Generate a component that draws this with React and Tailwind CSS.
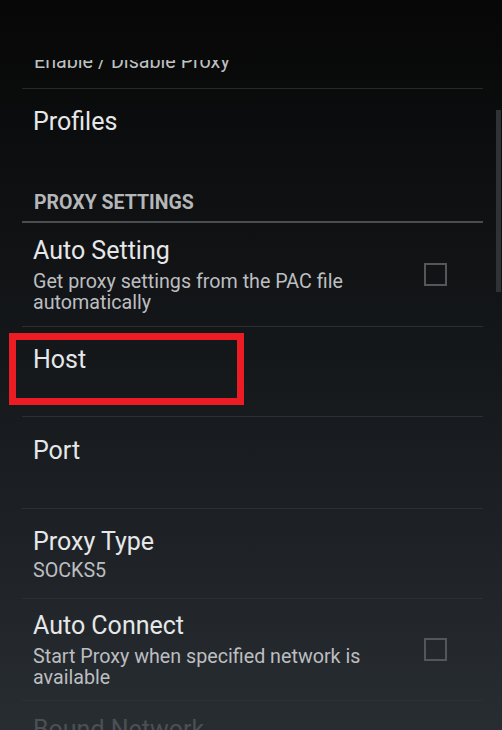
import React from "react";

const font = { fontFamily: "Roboto, 'Noto Sans', sans-serif" };

function Checkbox() {
  return <div className="w-[23px] h-[23px] border-2 border-[#53575a] shrink-0" />;
}

function Divider({ thick }) {
  return thick ? (
    <div className="h-[2px] bg-[#4a4d50]" />
  ) : (
    <div className="h-px bg-[#2c3033]" />
  );
}

export default function App() {
  return (
    <div
      className="relative w-[502px] h-[730px] overflow-hidden bg-gradient-to-b from-[#070707] via-[#15181b] to-[#282d32]"
      style={font}
    >
      <div className="h-[60px]" />
      <div className="ml-[22px] w-[461px] h-[670px] overflow-hidden">
        {/* clipped previous summary */}
        <div className="-mt-[9px] pl-[12px] pb-[16px] text-[19.7px] leading-[21px] text-[#bfc1c2]">
          Enable / Disable Proxy
        </div>
        <div className="h-px bg-[#2a2824]" />

        {/* Profiles */}
        <div className="pl-[11px] pt-[18px] h-[80px] text-[25px] leading-[30px] text-[#e6e7e8]">
          Profiles
        </div>

        {/* Category header */}
        <div className="pl-[12px] pt-[22px] pb-[7px] text-[19.5px] leading-[23px] font-bold text-[#b4b6b8]">
          PROXY SETTINGS
        </div>
        <Divider thick />

        {/* Auto Setting */}
        <div className="h-[103px] flex items-center pl-[11px] pr-[36px]">
          <div className="flex-1">
            <div className="text-[25px] leading-[30px] text-[#e6e7e8]">Auto Setting</div>
            <div className="mt-[5px] text-[19.7px] leading-[21px] text-[#bcbec0] w-[340px]">
              Get proxy settings from the PAC file automatically
            </div>
          </div>
          <Checkbox />
        </div>
        <Divider />

        {/* Host */}
        <div className="h-[89px] pl-[11px] pt-[18px]">
          <div className="text-[25px] leading-[30px] text-[#e6e7e8]">Host</div>
        </div>
        <Divider />

        {/* Port */}
        <div className="h-[91px] pl-[11px] pt-[19px]">
          <div className="text-[25px] leading-[30px] text-[#e6e7e8]">Port</div>
        </div>
        <Divider />

        {/* Proxy Type */}
        <div className="h-[89px] pl-[11px] pt-[18px]">
          <div className="text-[25px] leading-[30px] text-[#e6e7e8]">Proxy Type</div>
          <div className="mt-[3px] text-[19.7px] leading-[21px] text-[#bcbec0]">SOCKS5</div>
        </div>
        <Divider />

        {/* Auto Connect */}
        <div className="h-[101px] flex items-center pl-[11px] pr-[36px]">
          <div className="flex-1">
            <div className="text-[25px] leading-[30px] text-[#e6e7e8]">Auto Connect</div>
            <div className="mt-[5px] text-[19.7px] leading-[21px] text-[#bcbec0] w-[360px]">
              Start Proxy when specified network is available
            </div>
          </div>
          <Checkbox />
        </div>
        <Divider />

        {/* Bound Network (disabled) */}
        <div className="pl-[11px] pt-[14px] text-[25px] leading-[30px] text-[#4b5055]">
          Bound Network
        </div>
      </div>

      {/* annotation box over Host */}
      <div className="absolute left-[9px] top-[333px] w-[235px] h-[72px] border-[7px] border-[#ec1c24]" />

      {/* scrollbar */}
      <div className="absolute left-[496px] top-[110px] w-[5px] h-[182px] bg-[#2f3336]" />
    </div>
  );
}
